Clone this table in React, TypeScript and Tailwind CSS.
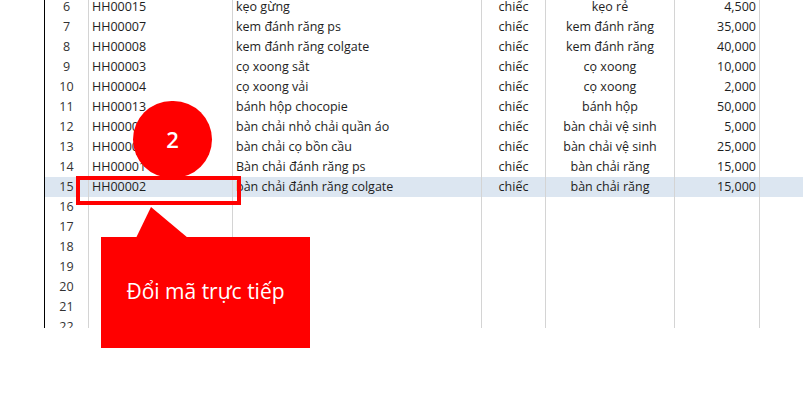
import React from "react";

type Row = { n: number; id: string; name: string; unit: string; cat: string; price: string };

const rows: Row[] = [
  { n: 6, id: "HH00015", name: "kẹo gừng", unit: "chiếc", cat: "kẹo rẻ", price: "4,500" },
  { n: 7, id: "HH00007", name: "kem đánh răng ps", unit: "chiếc", cat: "kem đánh răng", price: "35,000" },
  { n: 8, id: "HH00008", name: "kem đánh răng colgate", unit: "chiếc", cat: "kem đánh răng", price: "40,000" },
  { n: 9, id: "HH00003", name: "cọ xoong sắt", unit: "chiếc", cat: "cọ xoong", price: "10,000" },
  { n: 10, id: "HH00004", name: "cọ xoong vải", unit: "chiếc", cat: "cọ xoong", price: "2,000" },
  { n: 11, id: "HH00013", name: "bánh hộp chocopie", unit: "chiếc", cat: "bánh hộp", price: "50,000" },
  { n: 12, id: "HH00005", name: "bàn chải nhỏ chải quần áo", unit: "chiếc", cat: "bàn chải vệ sinh", price: "5,000" },
  { n: 13, id: "HH00006", name: "bàn chải cọ bồn cầu", unit: "chiếc", cat: "bàn chải vệ sinh", price: "25,000" },
  { n: 14, id: "HH00001", name: "Bàn chải đánh răng ps", unit: "chiếc", cat: "bàn chải răng", price: "15,000" },
  { n: 15, id: "HH00002", name: "bàn chải đánh răng colgate", unit: "chiếc", cat: "bàn chải răng", price: "15,000" },
  { n: 16, id: "", name: "", unit: "", cat: "", price: "" },
  { n: 17, id: "", name: "", unit: "", cat: "", price: "" },
  { n: 18, id: "", name: "", unit: "", cat: "", price: "" },
  { n: 19, id: "", name: "", unit: "", cat: "", price: "" },
  { n: 20, id: "", name: "", unit: "", cat: "", price: "" },
  { n: 21, id: "", name: "", unit: "", cat: "", price: "" },
  { n: 22, id: "", name: "", unit: "", cat: "", price: "" },
];

export default function App() {
  return (
    <div
      className="relative w-[803px] h-[413px] bg-white overflow-hidden text-[#1e1e1e]"
      style={{ fontFamily: '"Open Sans", "Noto Sans", sans-serif' }}
    >
      <div className="flex h-[328px]">
        <div className="w-[44px] shrink-0 bg-white" />
        <div className="flex-1 border-l border-black overflow-hidden">
          <div className="-mt-[3px] flex flex-col">
            {rows.map((r) => (
              <div
                key={r.n}
                className={`flex h-[20px] text-[12.5px] leading-[20px] ${r.n === 15 ? "bg-[#dce6f1]" : ""}`}
              >
                <div className="w-[44px] shrink-0 border-r border-[#d4d4d4] text-center text-[#333]">{r.n}</div>
                <div className="w-[144px] shrink-0 border-r border-[#d4d4d4] pl-[3px] whitespace-nowrap">{r.id}</div>
                <div className="w-[249px] shrink-0 border-r border-[#d4d4d4] pl-[3px] whitespace-nowrap">{r.name}</div>
                <div className="w-[64px] shrink-0 border-r border-[#d4d4d4] text-center whitespace-nowrap">{r.unit}</div>
                <div className="w-[129px] shrink-0 border-r border-[#d4d4d4] text-center whitespace-nowrap">{r.cat}</div>
                <div className="w-[85px] shrink-0 border-r border-[#d4d4d4] text-right pr-[3px] whitespace-nowrap">{r.price}</div>
                <div className="flex-1" />
              </div>
            ))}
          </div>
        </div>
      </div>

      {/* red highlight box */}
      <div className="absolute left-[76px] top-[176px] w-[165px] h-[29px] border-[4px] border-[#ff0000]" />

      {/* step circle */}
      <div className="absolute left-[133px] top-[101px] w-[79px] h-[77px] rounded-full bg-[#ff0000] flex items-center justify-center text-white text-[22px] font-semibold">
        2
      </div>

      {/* callout */}
      <svg className="absolute left-[130px] top-[205px]" width="64" height="34" viewBox="0 0 64 34">
        <polygon points="21,2 6,33 58,33" fill="#ff0000" />
      </svg>
      <div className="absolute left-[101px] top-[237px] w-[209px] h-[111px] bg-[#ff0000] flex items-center justify-center text-white text-[21px] pb-[1px]">
        Đổi mã trực tiếp
      </div>
    </div>
  );
}
